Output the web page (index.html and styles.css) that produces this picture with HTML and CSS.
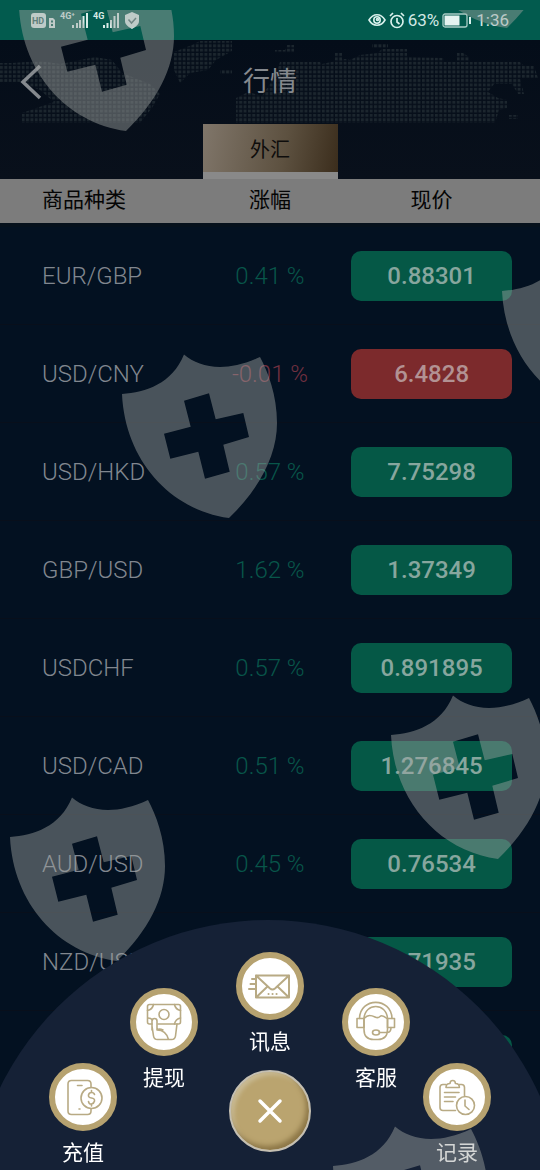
FILE: index.html
```
<!DOCTYPE html>
<html lang="zh-CN">
<head>
    <meta charset="UTF-8">
    <meta name="viewport" content="width=device-width, initial-scale=1.0">
    <title>行情</title>
    <link rel="stylesheet" href="styles.css">
</head>
<body>

<div class="status-bar">
    <div class="status-left">
        <svg width="112" height="20" viewBox="0 0 112 20" fill="#d9ebe7">
            <rect x="0" y="3" width="15" height="15" rx="3"/>
            <text x="1" y="14" class="hd">HD</text>
            <path d="M18 8h4l2 2v8h-6zM20 10.500v2h2v-2zM20 14v2h2v-2z" fill-rule="evenodd"/>
            <text x="29" y="9" class="net">4G⁺</text>
            <path d="M41 15h2v3h-2zM45 13h2v5h-2zM48 10h2v8h-2zM51.500 6h2v12h-2zM55 3h2v15h-2z"/>
            <text x="62" y="9" class="net">4G</text>
            <path d="M72 15h2v3h-2zM75.500 13h2v5h-2zM79 10h2v8h-2zM82.500 6h2v12h-2zM86 3h2v15h-2z"/>
            <path d="M101 2l7 3v6c0 4-4 6-7 8-3-2-7-4-7-8V5z"/>
            <path d="M97.500 9.500l3 3.500 4.500-5" fill="none" stroke="#4d6f6d" stroke-width="1.500"/>
        </svg>
    </div>
    <div class="status-right">
        <svg width="18" height="14" viewBox="0 0 18 14" fill="none" stroke="#d9f0ec" stroke-width="1.600">
            <path d="M1 7c4-7 12-7 16 0-4 7-12 7-16 0z"/>
            <circle cx="9" cy="7" r="3.200"/>
            <circle cx="9.500" cy="6.500" r="1"/>
        </svg>
        <svg width="16" height="17" viewBox="0 0 16 17" fill="none" stroke="#d9f0ec" stroke-width="1.700">
            <circle cx="8" cy="9.500" r="6"/>
            <path d="M8 6v4l2.500 2M1 4l3-3M15 4l-3-3"/>
        </svg>
        <span>63%</span>
        <svg class="battery" width="29" height="15" viewBox="0 0 29 15">
            <rect x="1" y="1" width="24" height="13" rx="2" fill="none" stroke="#a9cdc6" stroke-width="1.300"/>
            <rect x="2.500" y="2.500" width="15" height="10" fill="#e4f3f0"/>
            <path d="M28 4v7" stroke="#d9f0ec" stroke-width="2"/>
        </svg>
        <span>1:36</span>
    </div>
</div>

<header class="header">
    <svg class="world" viewBox="0 0 540 84" preserveAspectRatio="none">
        <defs>
            <pattern id="dots" width="4.350" height="4.350" patternUnits="userSpaceOnUse">
                <rect width="2.900" height="2.900" fill="#1c262e"/>
            </pattern>
        </defs>
        <g fill="url(#dots)">
            <path d="M0 23L12 23 40 21 60 24 95 17 112 20 122 33 150 44 160 54 152 68 140 83H22V73L54 62 40 50 20 42H0z"/>
            <path d="M174 12L192 5 200 1H232V11L216 20 208 30 190 33 180 43 174 30zM220 30h12v4h-12z"/>
            <path d="M236 58L248 52 262 56 276 34 280 22H320L322 24 345 19 350 20 360 15 378 13 382 9H407V17L443 18 444 22H520L524 26 534 26 538 38H520L524 54H518L512 44 494 44 488 52 498 58 507 60V68L499 70 495 83H236z"/>
            <path d="M275 10h10l2-5h7v8h-19zM372 4h16v4h-16zM334 13h8v8h-8zM457 13h6l6 4v4h-12zM508 75h10v4h-10z"/>
        </g>
    </svg>
    <div class="title-row">
        <button class="back" type="button" aria-label="返回">
            <svg width="22" height="36" viewBox="0 0 22 36" fill="none" stroke="#85898e" stroke-width="3.500">
                <path d="M20 2L3 18l17 16"/>
            </svg>
        </button>
        <h1>行情</h1>
    </div>
    <button class="tab" type="button">外汇</button>
</header>

<table class="quotes">
    <thead>
        <tr><th class="name">商品种类</th><th class="rate">涨幅</th><th class="price">现价</th></tr>
    </thead>
    <tbody>
        <tr><td class="name">EUR/GBP</td><td class="rate">0.41 %</td><td class="price"><span>0.88301</span></td></tr>
        <tr class="down"><td class="name">USD/CNY</td><td class="rate">-0.01 %</td><td class="price"><span>6.4828</span></td></tr>
        <tr><td class="name">USD/HKD</td><td class="rate">0.57 %</td><td class="price"><span>7.75298</span></td></tr>
        <tr><td class="name">GBP/USD</td><td class="rate">1.62 %</td><td class="price"><span>1.37349</span></td></tr>
        <tr><td class="name">USDCHF</td><td class="rate">0.57 %</td><td class="price"><span>0.891895</span></td></tr>
        <tr><td class="name">USD/CAD</td><td class="rate">0.51 %</td><td class="price"><span>1.276845</span></td></tr>
        <tr><td class="name">AUD/USD</td><td class="rate">0.45 %</td><td class="price"><span>0.76534</span></td></tr>
        <tr><td class="name">NZD/USD</td><td class="rate"></td><td class="price"><span>0.71935</span></td></tr>
        <tr><td class="name"></td><td class="rate"></td><td class="price"><span></span></td></tr>
    </tbody>
</table>

<nav class="menu">
    <div class="disc"></div>
    <div class="items">
        <a class="item low" href="#">
            <svg viewBox="0 0 56 56">
                <path d="M36 18.500V15q0-3.500-3.500-3.500h-16Q13 11.500 13 15v27q0 3.500 3.500 3.500h16Q36 45.500 36 42v-2M22.500 16.500h4.500M24 40h1"/>
                <circle cx="36.500" cy="29" r="10.500"/>
                <path d="M39.500 25.500q-.5-2-3-2t-3 2.500 3 3 3 3-3 3-3-2.500M36.500 21.500v2M36.500 35v2"/>
            </svg>
            <span>充值</span>
        </a>
        <a class="item mid" href="#">
            <svg viewBox="0 0 56 56">
                <path d="M16 30h-2.500q-2 0-2-2V12.500q0-2 2-2h29q2 0 2 2V28q0 2-2 2H22"/>
                <circle cx="28" cy="20.500" r="5"/>
                <path d="M11.500 16.500q5-1 6-6M38.500 10.500q1 5 6 6M38.500 30q1-5 6-6M12 24q3 0 4.500 2"/>
                <path d="M16 36V27q0-2.500 2.500-2.500T21 27v9q9 0 11.500 9.500M16 32l1.500 10q.5 3.500 4 3.500h14q3.500 0 4-3.500L41 30M21 36q2-2 6 0"/>
            </svg>
            <span>提现</span>
        </a>
        <div class="center">
            <a class="item" href="#">
                <svg viewBox="0 0 56 56">
                    <path stroke-width="2" d="M14 17.500h33v22H14zM14 17.500l14 13q2.500 2 5 0l14-13M14 39.500l11.500-11M47 39.500L35.500 28.500M10 21h4M8.500 26H14M7 31h7"/>
                    <path stroke-width="2" d="M26.500 36h.1M30.500 36h.1M34.500 36h.1"/>
                </svg>
                <span>讯息</span>
            </a>
            <button class="close" type="button" aria-label="关闭">
                <svg width="26" height="26" viewBox="0 0 26 26" fill="none" stroke="#fff" stroke-width="3.500" stroke-linecap="round">
                    <path d="M3 3l20 20M23 3L3 23"/>
                </svg>
            </button>
        </div>
        <a class="item mid" href="#">
            <svg viewBox="0 0 56 56">
                <path d="M11.500 24.500C12 3 43.500 3 44 24.500M16 24.500C17 8.500 38.500 8.500 39.500 24.500"/>
                <path d="M16 24.500H9v9h7zM39.500 24.500h7v9h-7z"/>
                <path d="M16 24.500v11q0 10 9.500 10h4.500q9.500 0 9.500-10v-11M16 24.500q3-3 5.500-3t5.500 1.500q3 1.500 5-.500t7 2M43 33.500q0 5-4 5h-7.500"/>
                <ellipse cx="28" cy="38.500" rx="3.500" ry="2.500"/>
            </svg>
            <span>客服</span>
        </a>
        <a class="item low" href="#">
            <svg viewBox="0 0 56 56">
                <path d="M26.500 41.500H14q-3 0-3-3v-20q0-3 3-3h3M30 15.500h2.500q3 0 3 3v8"/>
                <path d="M17 18.500q0-4 4-4 0-3 2.700-3t2.700 3q4 0 4 4zM15.500 23.500H30M15.500 28h11M15.500 32.500H24"/>
                <circle cx="36.500" cy="36.500" r="9"/>
                <path d="M36 31v6l4 3.500"/>
            </svg>
            <span>记录</span>
        </a>
    </div>
</nav>

<svg class="shields" viewBox="0 0 540 1160" preserveAspectRatio="xMidYMin slice">
    <defs>
        <path id="shield" fill-rule="evenodd" d="M74 14.500C90 28 116 33 150 17C158 32 167 55 167 83C167 115 150 148 119 178C60 170 15 120 12 54C36 52 62 44 74 14.500z
            M74 60.700L99 53.300 105.700 79.300 133.300 73 139 97 113.300 104.700 119.700 131.700 95 138.700 88.300 111.700 60.300 118.700 54 93.700 80.700 86.700z"/>
    </defs>
    <use href="#shield" x="7" y="-57"/>
    <use href="#shield" x="388" y="-160"/>
    <use href="#shield" x="490" y="227"/>
    <use href="#shield" x="110" y="330"/>
    <use href="#shield" x="379" y="671"/>
    <use href="#shield" x="-2" y="773"/>
    <use href="#shield" x="321" y="1102"/>
</svg>

</body>
</html>
```
FILE: styles.css
```
body {
    margin: 0;
    min-height: 100vh;
    background-color: #031121;
    font-family: Roboto, "Noto Sans CJK SC", sans-serif;
    overflow: hidden;
}

button {
    padding: 0;
    border: none;
    background: none;
    font-family: inherit;
    cursor: pointer;
}

svg {
    display: block;
}

/* status bar */
.status-bar {
    display: flex;
    justify-content: space-between;
    align-items: center;
    height: 40px;
    padding: 0 31px;
    background-color: #025b4e;
    color: #d3e8e4;
    font-size: 17px;
}

.status-right {
    display: flex;
    align-items: center;
    gap: 3px;
}

.battery {
    margin-right: 2px;
}

.hd {
    font-size: 9px;
    font-weight: 700;
    fill: #2c6259;
}

.net {
    font-size: 9px;
    font-weight: 700;
}

/* header */
.header {
    position: relative;
    display: flex;
    flex-direction: column;
    align-items: center;
    background: linear-gradient(#040d19, #09101b);
}

.world {
    position: absolute;
    top: 0;
    left: 0;
    width: 100%;
    height: 84px;
}

.title-row {
    position: relative;
    display: grid;
    grid-template-columns: 1fr auto 1fr;
    align-items: center;
    box-sizing: border-box;
    width: 100%;
    height: 84px;
    padding: 0 20px;
}

.back {
    width: 22px;
}

h1 {
    margin: 0;
    padding-bottom: 5px;
    color: #85898e;
    font-size: 27px;
    font-weight: 400;
}

.tab {
    position: relative;
    width: 25%;
    height: 55px;
    border-bottom: 7px solid #898989;
    background: linear-gradient(100deg, #80766a, #5d5140 60%, #3b2d1c);
    color: #0e0d0c;
    font-size: 20px;
}

/* quotes */
.quotes {
    width: 100%;
    border-collapse: collapse;
    table-layout: fixed;
}

.quotes th {
    height: 41px;
    padding: 0 0 3px;
    border-bottom: 4px solid #06111c;
    background-color: #7c7c7c;
    color: #050505;
    font-size: 21px;
    font-weight: 400;
    line-height: 30px;
}

.quotes td {
    height: 97px;
    padding: 0;
    border-bottom: 1px solid #080f1b;
    font-size: 24px;
    font-weight: 300;
}

.quotes .name {
    width: 37%;
    padding-left: 42px;
    box-sizing: border-box;
    text-align: left;
}

.quotes .rate {
    width: 26%;
    text-align: center;
}

.quotes .price {
    padding-left: 11px;
    padding-right: 28px;
    text-align: center;
}

td.name {
    color: #81878f;
}

td.rate {
    color: #08564a;
}

.price span {
    display: block;
    height: 50px;
    border-radius: 10px;
    background-color: #055846;
    color: #87a69e;
    font-weight: 500;
    line-height: 50px;
}

.down td.rate {
    color: #713040;
}

.down .price span {
    background-color: #7c2a2c;
    color: #b29293;
}

/* bottom menu */
.menu {
    position: fixed;
    left: 0;
    right: 0;
    bottom: 0;
    height: 250px;
    overflow: hidden;
}

.disc {
    position: absolute;
    top: 0;
    left: 50%;
    width: 596px;
    height: 596px;
    margin-left: -300px;
    border-radius: 50%;
    background-color: #152136;
}

.items {
    position: relative;
    display: flex;
    justify-content: center;
    gap: 13px;
    padding-top: 32px;
}

.center {
    display: flex;
    flex-direction: column;
    align-items: center;
    gap: 16px;
    margin: 0 18px;
}

.item {
    display: flex;
    flex-direction: column;
    align-items: center;
    gap: 10px;
    width: 68px;
    color: #fff;
    font-size: 21px;
    line-height: 24px;
    text-decoration: none;
}

.item svg {
    width: 56px;
    height: 56px;
    border: 6px solid #b6a270;
    border-radius: 50%;
    background-color: #fff;
    fill: none;
    stroke: #b8aa84;
    stroke-width: 1.6;
    stroke-linecap: round;
    stroke-linejoin: round;
}

.mid {
    padding-top: 36px;
}

.low {
    padding-top: 111px;
}

.close {
    display: flex;
    justify-content: center;
    align-items: center;
    box-sizing: border-box;
    width: 82px;
    height: 82px;
    border: 2px solid #c4bfb2;
    border-radius: 50%;
    background-color: #baa46f;
    box-shadow: inset -3px -4px 5px #8d7747, inset 3px 3px 4px #c9bb95;
}

/* shield pattern over the whole screen */
.shields {
    position: fixed;
    top: 10px;
    left: 0;
    width: 100%;
    height: calc(100% - 10px);
    fill: #a1a5a2;
    opacity: 0.45;
    pointer-events: none;
}
```
